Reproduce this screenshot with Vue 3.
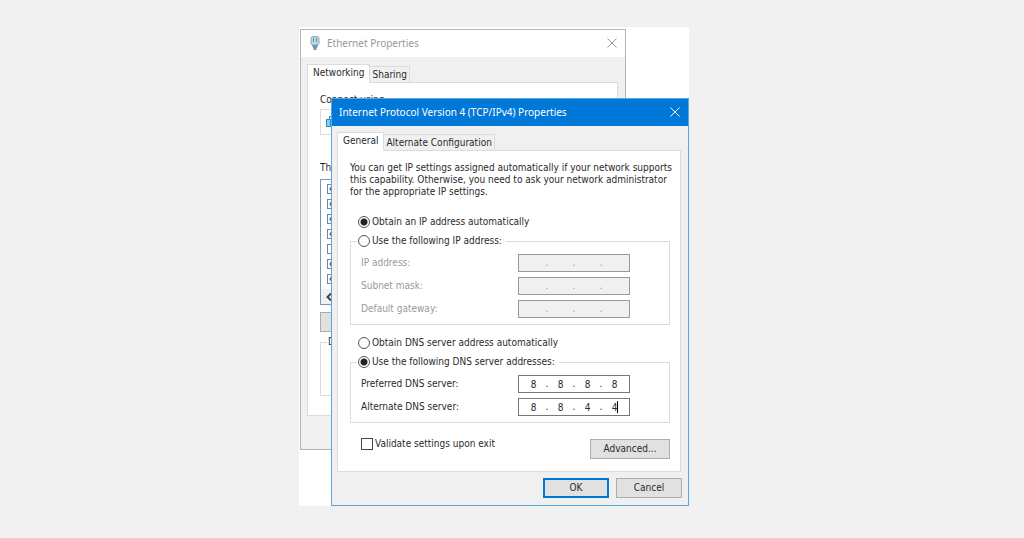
<template>
  <main class="page">
    <div class="desktop">
      <section class="window ethernet" aria-label="Ethernet Properties">
        <header class="title-bar">
          <svg class="plug" viewBox="0 0 10 14" aria-hidden="true">
            <rect x="1" y="0.5" width="8" height="8.5" rx="2" fill="#c3d5df" stroke="#94a9b5" />
            <path d="M3.500 2v4M6.500 2v4" stroke="#5f97ba" />
            <path d="M2 9h6l-1 3H3z" fill="#5c9fc6" />
            <path d="M5 11v3" stroke="#78909c" stroke-width="3" />
          </svg>
          <h2>Ethernet Properties</h2>
          <button class="close" type="button" aria-label="Close">
            <svg viewBox="0 0 10 10"><path d="M0.500 0.500l9 9M9.500 0.500l-9 9" /></svg>
          </button>
        </header>
        <div class="window-body">
          <nav class="tabs">
            <button class="tab active" type="button">Networking</button>
            <button class="tab" type="button">Sharing</button>
          </nav>
          <div class="panel">
            <p class="caption">Connect using:</p>
            <div class="adapter">
              <svg viewBox="0 0 14 12" aria-hidden="true">
                <rect x="3.500" y="0.500" width="10" height="7" fill="#d8effb" stroke="#2d8cc4" />
                <rect x="0.500" y="3.500" width="4" height="7" fill="#8cc8ea" stroke="#2d8cc4" />
                <path d="M5 10.500h7" stroke="#2d8cc4" />
              </svg>
            </div>
            <p class="caption items-caption">Th</p>
            <div class="items">
              <input
                v-for="(item, i) in items"
                :key="i"
                v-model="item.checked"
                class="check"
                type="checkbox"
                :aria-label="`Item ${i + 1}`"
              />
              <div class="scroll-bar">
                <svg viewBox="0 0 6 8"><path d="M5 0.500L1.500 4L5 7.500" /></svg>
              </div>
            </div>
            <button class="btn install" type="button" aria-label="Install"></button>
            <fieldset class="description">
              <legend>D</legend>
            </fieldset>
          </div>
        </div>
      </section>

      <form class="window tcp" @submit.prevent>
        <header class="title-bar">
          <h1>Internet Protocol Version 4 (TCP/IPv4) Properties</h1>
          <button class="close" type="button" aria-label="Close">
            <svg viewBox="0 0 10 10"><path d="M0.500 0.500l9 9M9.500 0.500l-9 9" /></svg>
          </button>
        </header>
        <div class="window-body">
          <nav class="tabs">
            <button class="tab active" type="button">General</button>
            <button class="tab" type="button">Alternate Configuration</button>
          </nav>
          <div class="panel">
            <p class="intro">
              You can get IP settings assigned automatically if your network supports<br />
              this capability. Otherwise, you need to ask your network administrator<br />
              for the appropriate IP settings.
            </p>

            <label class="option lone">
              <input v-model="ipMode" class="radio" type="radio" name="ip" value="auto" />
              Obtain an IP address automatically
            </label>
            <fieldset class="group">
              <legend>
                <label class="option">
                  <input v-model="ipMode" class="radio" type="radio" name="ip" value="manual" />
                  Use the following IP address:
                </label>
              </legend>
              <div v-for="row in ipRows" :key="row.id" class="row" :class="{ disabled: ipMode === 'auto' }">
                <label :for="row.id">{{ row.label }}</label>
                <div class="ip-field">
                  <template v-for="(n, i) in 4" :key="n">
                    <span v-if="i > 0" class="dot">.</span>
                    <input
                      :id="i === 0 ? row.id : null"
                      v-model="row.octets[i]"
                      type="text"
                      maxlength="3"
                      :aria-label="i > 0 ? `${row.label} ${n}` : null"
                      :disabled="ipMode === 'auto'"
                    />
                  </template>
                </div>
              </div>
            </fieldset>

            <label class="option lone">
              <input v-model="dnsMode" class="radio" type="radio" name="dns" value="auto" />
              Obtain DNS server address automatically
            </label>
            <fieldset class="group">
              <legend>
                <label class="option">
                  <input v-model="dnsMode" class="radio" type="radio" name="dns" value="manual" />
                  Use the following DNS server addresses:
                </label>
              </legend>
              <div v-for="row in dnsRows" :key="row.id" class="row" :class="{ disabled: dnsMode === 'auto' }">
                <label :for="row.id">{{ row.label }}</label>
                <div class="ip-field">
                  <template v-for="(n, i) in 4" :key="n">
                    <span v-if="i > 0" class="dot">.</span>
                    <input
                      :id="i === 0 ? row.id : null"
                      v-model="row.octets[i]"
                      type="text"
                      maxlength="3"
                      :aria-label="i > 0 ? `${row.label} ${n}` : null"
                      :disabled="dnsMode === 'auto'"
                    />
                  </template>
                  <span v-if="row.active" class="caret"></span>
                </div>
              </div>
            </fieldset>

            <div class="extras">
              <label class="option validate">
                <input v-model="validate" class="check" type="checkbox" />
                Validate settings upon exit
              </label>
              <button class="btn advanced" type="button">Advanced...</button>
            </div>
          </div>
          <footer class="actions">
            <button class="btn primary" type="submit">OK</button>
            <button class="btn" type="button">Cancel</button>
          </footer>
        </div>
      </form>
    </div>
  </main>
</template>

<script setup>
import { ref, reactive } from 'vue'

const ipMode = ref('auto')
const dnsMode = ref('manual')
const validate = ref(false)

const items = reactive([true, true, true, true, false, true, true].map((checked) => ({ checked })))

const ipRows = reactive([
  { id: 'ip-address', label: 'IP address:', octets: ['', '', '', ''] },
  { id: 'subnet-mask', label: 'Subnet mask:', octets: ['', '', '', ''] },
  { id: 'gateway', label: 'Default gateway:', octets: ['', '', '', ''] }
])

const dnsRows = reactive([
  { id: 'dns-1', label: 'Preferred DNS server:', octets: ['8', '8', '8', '8'] },
  { id: 'dns-2', label: 'Alternate DNS server:', octets: ['8', '8', '4', '4'], active: true }
])
</script>

<style>
body {
  margin: 0;
  background: #f1f1f1;
}
</style>

<style scoped>
* {
  box-sizing: border-box;
}

.page {
  display: flex;
  justify-content: center;
  padding: 27px 36px 32px 0;
  color: #2a2a2a;
  font-family: 'DejaVu Sans Condensed', 'Noto Sans', sans-serif;
  font-size: 10px;
  line-height: 12px;
}

.desktop {
  position: relative;
  width: 100%;
  max-width: 390px;
  padding: 71px 0 0 32px;
  background: #fff;
}

h1,
h2,
p {
  margin: 0;
}

button,
input {
  margin: 0;
  padding: 0;
  color: inherit;
  font: inherit;
}

.window {
  background: #f0f0f0;
}

.tcp {
  position: relative;
  border: 1px solid #5ba7dc;
}

.ethernet {
  position: absolute;
  top: 2px;
  left: 1px;
  width: 326px;
  border: 1px solid #b4b4b4;
}

.title-bar {
  display: flex;
  align-items: center;
  height: 27px;
  padding: 0 8px 2px 7px;
  font-family: 'Noto Sans', sans-serif;
}

.title-bar h1,
.title-bar h2 {
  flex: 1;
  font-size: 10px;
  font-weight: 400;
}

.tcp .title-bar {
  background: #0078d7;
  color: #fff;
}

.ethernet .title-bar {
  gap: 7px;
  padding-left: 9px;
  background: #fff;
  color: #999;
}

.plug {
  width: 10px;
  height: 14px;
  fill: none;
}

.close {
  display: flex;
  border: 0;
  background: none;
}

.close svg {
  width: 10px;
  height: 10px;
  fill: none;
  stroke: currentColor;
}

.window-body {
  padding: 6px 7px 7px 5px;
}

.ethernet .window-body {
  padding: 7px 7px 33px 6px;
}

.tabs {
  display: flex;
  align-items: flex-end;
}

.tab {
  height: 16px;
  padding: 0 2px;
  border: 1px solid #dcdcdc;
  border-bottom: 0;
  border-left: 0;
  background: #f0f0f0;
}

.tab.active {
  position: relative;
  height: 19px;
  margin-bottom: -1px;
  padding: 0 5px 2px;
  border-left: 1px solid #dcdcdc;
  background: #fff;
}

.panel {
  border: 1px solid #dcdcdc;
  background: #fff;
}

.tcp .panel {
  padding: 11px 10px 12px 12px;
}

.ethernet .panel {
  padding: 11px 12px 19px;
}

.intro {
  margin-bottom: 18px;
  white-space: nowrap;
}

.option {
  display: flex;
  align-items: center;
  gap: 2px;
  white-space: nowrap;
}

.lone {
  padding-left: 8px;
}

.radio {
  appearance: none;
  width: 12px;
  height: 12px;
  border: 1px solid #555;
  border-radius: 50%;
  background: #fff;
}

.radio:checked {
  background: radial-gradient(circle, #222 3px, #fff 4px);
}

.group {
  min-width: 0;
  margin: 7px 0 12px;
  padding: 7px 39px 6px 10px;
  border: 1px solid #dcdcdc;
}

.group legend {
  margin-left: -4px;
  padding: 0 4px 0 1px;
}

.row {
  display: flex;
  align-items: center;
  justify-content: space-between;
}

.row + .row {
  margin-top: 5px;
}

.row.disabled {
  color: #999;
}

.ip-field {
  position: relative;
  display: flex;
  align-items: center;
  width: 112px;
  height: 18px;
  padding-left: 3px;
  border: 1px solid #777;
  background: #fff;
}

.disabled .ip-field {
  background: #f0f0f0;
  border-color: #999;
}

.ip-field input {
  width: 23px;
  height: 14px;
  border: 0;
  outline: 0;
  background: none;
  text-align: center;
}

.dot {
  width: 4px;
  text-align: center;
}

.caret {
  position: absolute;
  top: 2px;
  right: 11px;
  width: 1px;
  height: 12px;
  background: #000;
}

.extras {
  display: flex;
  align-items: flex-start;
  justify-content: space-between;
  padding-left: 11px;
}

.validate {
  margin-top: 3px;
}

.check {
  appearance: none;
  width: 12px;
  height: 12px;
  border: 1px solid #444;
  background: #fff;
}

.btn {
  width: 66px;
  height: 20px;
  border: 1px solid #adadad;
  background: #e1e1e1;
}

.btn.primary {
  border: 2px solid #0078d7;
}

.btn.advanced {
  width: 80px;
}

.extras .advanced {
  margin-top: 4px;
}

.actions {
  display: flex;
  justify-content: flex-end;
  gap: 7px;
  margin-right: -1px;
  padding-top: 6px;
}

.caption {
  white-space: nowrap;
}

.adapter {
  display: flex;
  align-items: center;
  height: 26px;
  margin-top: 3px;
  padding-left: 5px;
  border: 1px solid #dcdcdc;
}

.adapter svg {
  width: 14px;
  height: 12px;
}

.items-caption {
  margin-top: 27px;
}

.items {
  display: flex;
  flex-direction: column;
  gap: 5px;
  height: 126px;
  margin-top: 5px;
  padding: 4px 0 0 6px;
  border: 1px solid #7a98b4;
}

.items .check {
  flex: none;
  width: 10px;
  height: 10px;
  border-color: #6a8aa8;
}

.items .check:checked {
  background: radial-gradient(circle, #222 1px, #fff 3px);
}

.scroll-bar {
  display: flex;
  align-items: center;
  flex: 1;
  margin-left: -6px;
  padding-left: 5px;
  background: #f0f0f0;
}

.scroll-bar svg {
  width: 6px;
  height: 8px;
  fill: none;
  stroke: #444;
  stroke-width: 2;
}

.install {
  display: block;
  margin-top: 7px;
}

.description {
  height: 60px;
  margin: 4px 0 0;
  padding: 0;
  border: 1px solid #dcdcdc;
}

.description legend {
  margin-left: 6px;
  padding: 0 1px;
}
</style>
